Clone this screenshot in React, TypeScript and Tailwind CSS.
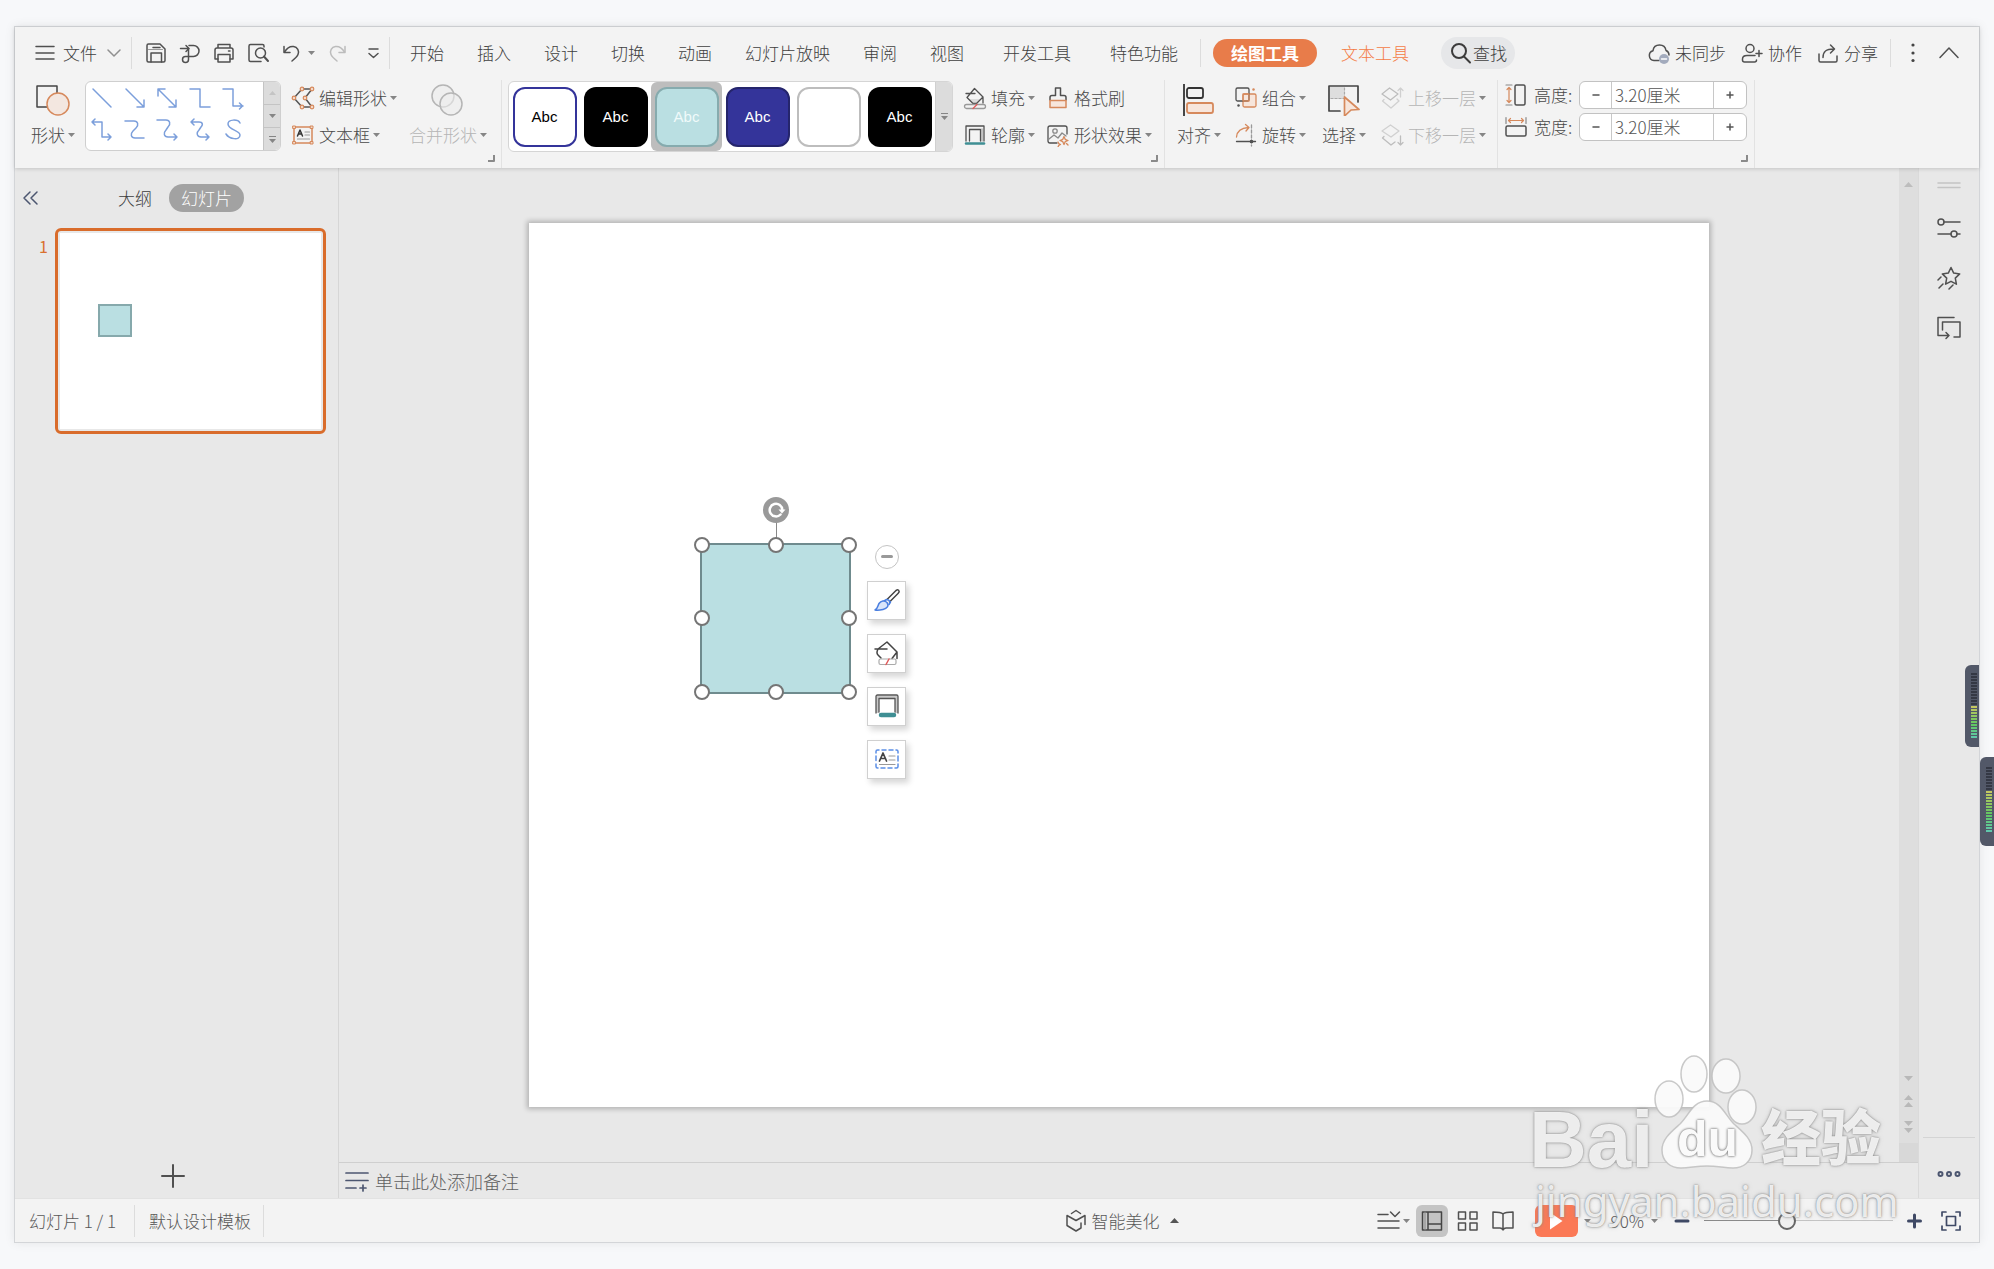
import React from 'react';

type Kids = { children?: React.ReactNode };

function Glyph({
  w = 24,
  h = 24,
  stroke = '#505050',
  sw = 1.5,
  className = '',
  children,
}: Kids & { w?: number; h?: number; stroke?: string; sw?: number; className?: string }) {
  return (
    <svg
      width={w}
      height={h}
      viewBox={`0 0 ${w} ${h}`}
      fill="none"
      stroke={stroke}
      strokeWidth={sw}
      strokeLinecap="round"
      strokeLinejoin="round"
      aria-hidden="true"
      className={`shrink-0 ${className}`}
    >
      {children}
    </svg>
  );
}

function Caret({ color = '#858585', up = false, w = 7, h = 4 }: { color?: string; up?: boolean; w?: number; h?: number }) {
  return (
    <svg width={w} height={h} viewBox="0 0 7 4" preserveAspectRatio="none" aria-hidden="true" className="shrink-0">
      <path d={up ? 'M0 4 3.5 0 7 4z' : 'M0 0h7L3.5 4z'} fill={color} />
    </svg>
  );
}

const OR = '#d6895c';
const DARK = '#444';

/* ---------- tab bar ---------- */

function VLine({ className = '' }: { className?: string }) {
  return <span className={`w-px shrink-0 bg-[#dcdcdc] ${className}`} />;
}

function QuickAccess() {
  return (
    <div className="flex items-center">
      <button aria-label="保存" className="ml-3">
        <Glyph>
          <path d="M3 4.500Q3 3 4.500 3H16l5 5v11.500q0 1.500-1.500 1.500h-15Q3 21 3 19.500z" />
          <path d="M7 21v-9h10.500v9M9 6.500h7" />
          <path d="M4.500 8.500h14" strokeWidth="1" stroke="#999" />
        </Glyph>
      </button>
      <button aria-label="输出为PDF" className="ml-2.5">
        <Glyph>
          <path d="M2.500 7.500h8M8 4.500l3 3-3 3" />
          <path d="M11 4.500h4.500a5.500 5.500 0 0 1 0 11H7.500a3 3 0 1 0 3 3V7.500" />
        </Glyph>
      </button>
      <button aria-label="打印" className="ml-2.5">
        <Glyph>
          <path d="M6 7V3.500h12V7M6 18H3V9q0-2 2-2h14q2 0 2 2v9h-3" />
          <path d="M6 13.500h12V21H6zM16.500 10h1.500" />
        </Glyph>
      </button>
      <button aria-label="打印预览" className="ml-2.5">
        <Glyph>
          <path d="M18 6V5q0-1.500-1.500-1.500h-12Q3 3.500 3 5v14q0 1.500 1.500 1.500H15" />
          <circle cx="14.500" cy="12" r="5" />
          <path d="m18 15.500 4 4.500" strokeWidth="2" />
        </Glyph>
      </button>
      <button aria-label="撤销" className="ml-2.5 flex items-center gap-1">
        <Glyph>
          <path d="M4 5.500v6h6" />
          <path d="M4.500 11C7 7 10 5 13.500 5.500c4 .5 6 4.500 4.500 8-1 2.500-3.500 4.500-6 6.500" />
        </Glyph>
        <Caret />
      </button>
      <button aria-label="恢复" className="ml-2.5">
        <Glyph stroke="#bcbcbc">
          <path d="M20 5.500v6h-6" />
          <path d="M19.500 11C17 7 14 5 10.500 5.500c-4 .5-6 4.500-4.500 8 1 2.500 3.500 4.500 6 6.500" />
        </Glyph>
      </button>
      <button aria-label="自定义快速访问工具栏" className="ml-3">
        <Glyph>
          <path d="M8 8h9M8 12.500l4.500 4 4.500-4" />
        </Glyph>
      </button>
    </div>
  );
}

const tabsA = ['开始', '插入', '设计', '切换', '动画', '幻灯片放映', '审阅', '视图'];
const tabsB = ['开发工具', '特色功能'];

function TabBar() {
  return (
    <nav className="flex h-[52px] items-center whitespace-nowrap pl-5 pr-[18px] text-[#404040]">
      <button className="flex items-center gap-2">
        <Glyph w={20}>
          <path d="M1 5.500h18M1 12h18M1 18h18" />
        </Glyph>
        文件
        <Glyph w={14} className="ml-0.5" stroke="#909090">
          <path d="m1 9 6 6 6-6" />
        </Glyph>
      </button>
      <VLine className="ml-2.5 h-8" />
      <QuickAccess />
      <VLine className="ml-1 h-8" />
      <div className="ml-5 flex gap-[33px]">
        {tabsA.map((t) => (
          <button key={t}>{t}</button>
        ))}
      </div>
      <div className="ml-[39px] flex gap-[39px]">
        {tabsB.map((t) => (
          <button key={t}>{t}</button>
        ))}
      </div>
      <VLine className="ml-[22px] h-7" />
      <button className="ml-3 h-7 rounded-full bg-[#e87c4a] px-[18px] font-bold text-white">绘图工具</button>
      <button className="ml-6 text-[#f47b45]">文本工具</button>
      <button className="ml-8 flex h-8 items-center rounded-full bg-[#e6e7e9] px-2">
        <Glyph stroke="#3c3c3c" sw={2}>
          <circle cx="10" cy="10" r="7" />
          <path d="m15 15.500 6 6" />
        </Glyph>
        查找
      </button>
      <div className="ml-auto flex items-center">
        <button className="flex items-center gap-1">
          <Glyph>
            <path d="M12 19.500H7a5 5 0 0 1-1-9.800C6.500 6 9 4 12.500 4s6 2 6.500 5.500c2 .8 3 2.300 3 4.500" />
            <circle cx="17" cy="18" r="5" fill="#a3abbd" stroke="none" />
            <path d="M14.500 18h5" stroke="#fff" />
          </Glyph>
          未同步
        </button>
        <button className="ml-3.5 flex items-center gap-1">
          <Glyph>
            <circle cx="10" cy="7.500" r="4" />
            <path d="M15 14.500H7Q2.500 14.500 2.500 18v1q0 2 2 2h10q2 0 2-2M16 12.500h6M19 9.500v6" />
          </Glyph>
          协作
        </button>
        <button className="ml-3.5 flex items-center gap-1">
          <Glyph>
            <path d="M3 13v6.500q0 1.500 1.500 1.500h15q1.500 0 1.500-1.500V15" />
            <path d="M7 16.500C7 10.500 10 8 17.500 8M14.500 4l4 4-4 4" />
          </Glyph>
          分享
        </button>
        <VLine className="ml-3 h-7" />
        <button aria-label="更多" className="ml-2.5">
          <Glyph stroke="none">
            <g fill="#444">
              <circle cx="12" cy="4" r="1.600" />
              <circle cx="12" cy="12" r="1.600" />
              <circle cx="12" cy="19.500" r="1.600" />
            </g>
          </Glyph>
        </button>
        <button aria-label="收起功能区" className="ml-3">
          <Glyph>
            <path d="m3 16.500 9-9.500 9 9.500" />
          </Glyph>
        </button>
      </div>
    </nav>
  );
}

/* ---------- ribbon ---------- */

function Group({ children, className = '', corner = true }: Kids & { className?: string; corner?: boolean }) {
  return (
    <section className={`relative flex shrink-0 border-r border-[#e2e2e2] ${className}`}>
      {children}
      {corner && (
        <button aria-label="更多设置" className="absolute bottom-1.5 right-1.5">
          <Glyph w={7} h={7} stroke="#8a8a8a" sw={2}>
            <path d="M0 6h6V0" />
          </Glyph>
        </button>
      )}
    </section>
  );
}

function BigButton({ label, icon, className = '' }: { label: string; icon: React.ReactNode; className?: string }) {
  return (
    <button className={`flex flex-col items-center gap-px ${className}`}>
      <span className="flex h-9 items-end">{icon}</span>
      <span className="flex h-9 items-center gap-[3px]">
        {label}
        <Caret />
      </span>
    </button>
  );
}

function RowButton({
  label,
  icon,
  caret = true,
  className = '',
}: {
  label: string;
  icon: React.ReactNode;
  caret?: boolean;
  className?: string;
}) {
  return (
    <button className={`flex h-9 items-center ${className}`}>
      {icon}
      <span className="ml-1 mr-[3px]">{label}</span>
      {caret && <Caret />}
    </button>
  );
}

function Pair({ children, className = '' }: Kids & { className?: string }) {
  return <div className={`flex flex-col gap-px ${className}`}>{children}</div>;
}

const lineShapes: [string, string][] = [
  ['直线', 'M3 3l18 18'],
  ['箭头', 'M3 3l18 18M21 14v7h-7'],
  ['双箭头', 'M3 3l18 18M21 14v7h-7M3 10V3h7'],
  ['肘形连接符', 'M2 3h10v18h10'],
  ['肘形箭头连接符', 'M2 3h10v17h10M18.500 17l3 3-3 3'],
  ['肘形双箭头连接符', 'M2 4h10v15h9M18 16l3 3-3 3M5 1 2 4l3 3'],
  ['曲线连接符', 'M2 3h9c4 0 5 4 2 7l-3 3c-3 3-2 7 2 7h9'],
  ['曲线箭头连接符', 'M2 2h9c4 0 5 4 2 7l-2 3c-3 3-2 7 2 7h9M19 16l3 3-3 3'],
  ['曲线双箭头连接符', 'M3 4h8c4 0 4 3 2 5l-2 3c-3 3-2 7 2 7h8M18 16l3 3-3 3M6 1 3 4l3 3'],
  ['曲线', 'M19 5c-2-4-12-4-12 1 0 6 12 6 12 11 0 6-11 4-14-1'],
];

function ShapeGallery() {
  return (
    <div className="ml-2.5 mt-px flex h-[70px] w-[196px] overflow-hidden rounded-md border border-[#cfcfcf] bg-white">
      <div className="grid flex-1 grid-cols-5 pb-1 pr-3.5">
        {lineShapes.map(([name, d]) => (
          <button key={name} aria-label={name} className="flex items-center justify-center">
            <Glyph stroke="#7c9fdb" sw={1.5}>
              <path d={d} />
            </Glyph>
          </button>
        ))}
      </div>
      <div className="flex w-[17px] flex-col divide-y divide-[#c4c4c4] border-l border-[#c4c4c4] bg-[#dcdcdc]">
        <button aria-label="上一行" className="flex flex-1 items-center justify-center">
          <Caret up color="#c4c4c4" />
        </button>
        <button aria-label="下一行" className="flex flex-1 items-center justify-center">
          <Caret />
        </button>
        <button aria-label="展开" className="flex flex-1 flex-col items-center justify-center gap-0.5">
          <span className="h-px w-[7px] bg-[#858585]" />
          <Caret />
        </button>
      </div>
    </div>
  );
}

const swatches = [
  { box: 'border-2 border-[#34349a] bg-white text-black' },
  { box: 'bg-black text-white' },
  { box: 'border-2 border-[#86abae] bg-[#badfe2] text-[#f0fafa]', selected: true },
  { box: 'border-2 border-[#25256c] bg-[#34349a] text-white' },
  { box: 'border-2 border-[#bdbdbd] bg-white text-white' },
  { box: 'bg-black text-white' },
];

function StyleGallery() {
  return (
    <div className="ml-1.5 mt-px flex h-[71px] overflow-hidden rounded-md border border-[#d5d5d5] bg-white">
      <div className="flex items-center">
        {swatches.map((s, i) => (
          <div
            key={i}
            className={`flex h-full w-[71px] items-center justify-center rounded-md ${s.selected ? 'bg-[#bdbdbd]' : ''}`}
          >
            <button
              aria-label={`形状样式 ${i + 1}`}
              className={`h-[60px] w-16 rounded-xl font-['Liberation_Sans',sans-serif] text-[15px] font-normal ${s.box}`}
            >
              {i === 4 ? '' : 'Abc'}
            </button>
          </div>
        ))}
      </div>
      <button
        aria-label="更多样式"
        className="flex w-[17px] flex-col items-center justify-center gap-0.5 border-l border-[#d0d0d0] bg-[#dcdcdc]"
      >
        <span className="h-px w-[7px] bg-[#858585]" />
        <Caret />
      </button>
    </div>
  );
}

const BucketIcon = (
  <Glyph sw={1.3}>
    <path d="M5.500 13h13l-5 5h-3z" fill="#dcdcdc" stroke="none" />
    <path d="M3 7.500h9M11.500 2.500 20 11l-6.500 6.500h-3.500L4 11.500zM20 11v6" />
    <rect x="1.500" y="18.500" width="21" height="4" rx="2" stroke="#999" />
    <path d="m10 22.500 4-4" stroke="#e05a5a" />
  </Glyph>
);

const OutlineIcon = (
  <Glyph sw={1.3}>
    <path d="M3 18V3h18v15M6.500 18V6.500h11V18" />
    <path d="M19 6v12" stroke="#aaa" />
    <path d="M3 20.500h18" stroke="#3f8f94" strokeWidth="2.500" />
  </Glyph>
);

function SizeField({ label, icon }: { label: string; icon: React.ReactNode }) {
  return (
    <div className="flex h-7 items-center">
      {icon}
      <label htmlFor={label} className="ml-1.5 w-[45px]">
        {label}:
      </label>
      <div className="flex h-7 w-[168px] divide-x divide-[#c8c8c8] overflow-hidden rounded-md border border-[#c2c2c2] bg-white">
        <button aria-label={`减小${label}`} className="flex w-8 shrink-0 items-center justify-center">
          <Glyph w={8} h={8} stroke="#555">
            <path d="M1 4h6" />
          </Glyph>
        </button>
        <input id={label} defaultValue="3.20厘米" className="min-w-0 flex-1 px-[3px] text-[#555] outline-none" />
        <button aria-label={`增大${label}`} className="flex w-8 shrink-0 items-center justify-center">
          <Glyph w={8} h={8} stroke="#555">
            <path d="M1 4h6M4 1v6" />
          </Glyph>
        </button>
      </div>
    </div>
  );
}

function Ribbon() {
  return (
    <div className="flex h-[89px] whitespace-nowrap pl-4 pt-px text-[#484848]">
      <Group className="pr-3.5">
        <BigButton
          label="形状"
          icon={
            <Glyph w={34} h={32} stroke={DARK}>
              <rect x="1" y="2" width="20" height="21" />
              <circle cx="22" cy="20" r="11" fill="#f3e7e0" stroke={OR} />
            </Glyph>
          }
        />
        <ShapeGallery />
        <Pair className="ml-2.5">
          <RowButton
            label="编辑形状"
            icon={
              <Glyph stroke="#555">
                <path d="m3 12 8-9h10l-7 9 7 9H11z" />
                <g fill="#f3d9c9" stroke={OR} strokeWidth="1.200">
                  <circle cx="3" cy="12" r="1.800" />
                  <circle cx="11" cy="3" r="1.800" />
                  <circle cx="21" cy="3" r="1.800" />
                  <circle cx="14" cy="12" r="1.800" />
                  <circle cx="21" cy="21" r="1.800" />
                  <circle cx="11" cy="21" r="1.800" />
                </g>
              </Glyph>
            }
          />
          <RowButton
            label="文本框"
            icon={
              <Glyph stroke={OR}>
                <rect x="3" y="4" width="18" height="16" />
                <g fill="#f3d9c9" strokeWidth="1">
                  <rect x="2" y="3" width="2.500" height="2.500" />
                  <rect x="19.500" y="3" width="2.500" height="2.500" />
                  <rect x="2" y="18.500" width="2.500" height="2.500" />
                  <rect x="19.500" y="18.500" width="2.500" height="2.500" />
                </g>
                <path d="m6.500 13 2.500-6 2.500 6M7.500 11h3" stroke="#333" />
                <path d="M14 9h4.500M14 12h4.500M6.500 16h12" stroke="#999" strokeWidth="1.200" />
              </Glyph>
            }
          />
        </Pair>
        <BigButton
          className="ml-3 text-[#b5b5b5]"
          label="合并形状"
          icon={
            <Glyph w={34} h={32} stroke="#b5b5b5">
              <circle cx="12" cy="12" r="11" fill="#ececec" fillOpacity=".6" />
              <circle cx="20" cy="20" r="11" fill="#ececec" fillOpacity=".6" />
            </Glyph>
          }
        />
      </Group>

      <Group className="pr-3">
        <StyleGallery />
        <Pair className="ml-2.5">
          <RowButton label="填充" icon={BucketIcon} />
          <RowButton label="轮廓" icon={OutlineIcon} />
        </Pair>
        <Pair className="ml-[11px]">
          <RowButton
            label="格式刷"
            caret={false}
            icon={
              <Glyph>
                <path d="M4 14v-2.500q0-2 2-2h3.500V2h5v7.500H18q2 0 2 2V14" />
                <path d="M4 14.500h16v7H4z" fill="#f7e6dc" stroke={OR} />
              </Glyph>
            }
          />
          <RowButton
            label="形状效果"
            icon={
              <Glyph sw={1.3}>
                <path d="M11 20H4q-2 0-2-2V5q0-2 2-2h15q2 0 2 2v6" />
                <circle cx="9" cy="8" r="2.200" stroke="#888" />
                <path d="m3 16 5-4 4 3 4-5 4 3" stroke="#888" />
                <path d="m18 13.500 1.200 2.800 2.800 1.200-2.800 1.200L18 21.500l-1.200-2.800L14 17.500l2.800-1.200zM12 19l.8 1.700 1.700.8-1.700.8L12 24M20.500 20.500l1.500 1.500" stroke={OR} />
              </Glyph>
            }
          />
        </Pair>
      </Group>

      <Group corner={false} className="pl-3 pr-[11px]">
        <BigButton
          label="对齐"
          icon={
            <Glyph w={34} h={32} stroke="#333" sw={1.8}>
              <path d="M2 0v32" />
              <rect x="5" y="4" width="16" height="10" rx="2" />
              <rect x="5" y="19" width="26" height="10" rx="2" fill="#f7e6dc" stroke={OR} />
            </Glyph>
          }
        />
        <Pair className="ml-[13px]">
          <RowButton
            label="组合"
            icon={
              <Glyph sw={1.3}>
                <rect x="9" y="8" width="13" height="13" rx="1.500" fill="#f7e6dc" stroke={OR} />
                <rect x="2" y="2" width="13" height="13" rx="1.500" />
                <rect x="9" y="8" width="6" height="7" stroke={OR} />
                <path d="M19.500 3.500v.1" stroke={OR} strokeWidth="2.500" />
                <path d="M4.500 19.500v.1" strokeWidth="2.500" />
              </Glyph>
            }
          />
          <RowButton
            label="旋转"
            icon={
              <Glyph sw={1.3}>
                <path d="M2.500 14C3 8 7 5 14.500 4.500M11.500 1.500l3.500 3-3 3.500" stroke={OR} />
                <path d="M2.500 18.500h19" />
                <path d="M17.500 2v21" stroke="#999" strokeDasharray="3 2" />
                <circle cx="17.500" cy="18.500" r="1.200" fill="#555" />
              </Glyph>
            }
          />
        </Pair>
        <BigButton
          className="ml-4"
          label="选择"
          icon={
            <Glyph w={34} h={32} stroke={DARK} sw={1.700}>
              <path d="M3 3h15v12H3z" fill="#dedede" stroke="none" />
              <path d="M13 27H2V2h29v16" />
              <path d="M4 14.500h14M17.500 4v10" stroke="#aaa" strokeDasharray="2 2" strokeWidth="1.200" />
              <path d="M17.500 13 32 25.500l-8 .5-6.500 6z" fill="#f7e6dc" stroke={OR} />
            </Glyph>
          }
        />
        <Pair className="ml-3.5 text-[#b5b5b5]">
          <RowButton
            label="上移一层"
            icon={
              <Glyph stroke="#bdbdbd" sw={1.3}>
                <path d="M9.500 2 18 8l-7.500 6L2 8z" />
                <path d="M4 13.500 2.500 15l8.500 7 8-7-2-2M20.500 11V2M18 4.500 20.500 2 23 4.500" stroke="#d0d0d0" />
              </Glyph>
            }
          />
          <RowButton
            label="下移一层"
            icon={
              <Glyph stroke="#bdbdbd" sw={1.3}>
                <path d="M10.500 2 19 8l-8 6L2 8z" stroke="#d0d0d0" />
                <path d="M4 13.500 2.500 15l8.500 7 4-3M20.500 13v9M18 19.500l2.500 2.500 2.500-2.500" />
              </Glyph>
            }
          />
        </Pair>
      </Group>

      <Group className="pl-1.5 pr-[7px]">
        <div className="mt-px flex flex-col gap-1">
          <SizeField
            label="高度"
            icon={
              <Glyph>
                <rect x="11" y="2" width="10" height="20" rx="1.500" />
                <path d="M5 4.500v15M3 6.500l2-2 2 2M3 17.500l2 2 2-2" stroke={OR} strokeWidth="1.200" />
                <path d="M2 2h6M2 22h6" stroke="#888" strokeWidth="1.200" />
              </Glyph>
            }
          />
          <SizeField
            label="宽度"
            icon={
              <Glyph>
                <rect x="2" y="11" width="20" height="10" rx="1.500" />
                <path d="M4.500 5.500h15M6.500 3.500l-2 2 2 2M17.500 3.500l2 2-2 2" stroke={OR} strokeWidth="1.200" />
                <path d="M2 2.500v6M22 2.500v6" stroke="#888" strokeWidth="1.200" />
              </Glyph>
            }
          />
        </div>
      </Group>
    </div>
  );
}

/* ---------- slide panel ---------- */

function SlidePanel() {
  return (
    <aside className="flex w-[324px] shrink-0 flex-col border-r border-[#d6d6d6]">
      <div className="mt-4 flex h-7 items-center pl-1">
        <button aria-label="收起面板">
          <Glyph stroke="#4c5670">
            <path d="m11 6-6 6 6 6M18 6l-6 6 6 6" />
          </Glyph>
        </button>
        <button className="ml-[75px] text-[#3c3c3c]">大纲</button>
        <button className="ml-[17px] h-7 rounded-full bg-[#a2a2a2] px-3 text-white">幻灯片</button>
      </div>
      <div className="mt-4 flex items-start pl-6 pr-3">
        <span className="mt-1.5 w-4 text-base font-normal text-[#d9702f]">1</span>
        <button
          aria-label="幻灯片 1"
          className="aspect-[271/206] flex-1 rounded-md border-[3px] border-[#d96c2b] bg-[#e8e8e8] p-0.5"
        >
          <span className="relative block h-full bg-white">
            <span className="absolute left-[14.500%] top-[36%] block aspect-square w-[13%] border-2 border-[#86a9ac] bg-[#badfe2]" />
          </span>
        </button>
      </div>
      <button aria-label="新建幻灯片" className="mb-2.5 mt-auto self-center pr-2">
        <Glyph stroke="#505050" sw={2}>
          <path d="M12 1v22M1 12h22" />
        </Glyph>
      </button>
    </aside>
  );
}

/* ---------- canvas ---------- */

const handles = [
  'left-0 top-0',
  'left-1/2 top-0',
  'left-full top-0',
  'left-0 top-1/2',
  'left-full top-1/2',
  'left-0 top-full',
  'left-1/2 top-full',
  'left-full top-full',
];

const floatTools: [string, React.ReactNode][] = [
  [
    '样式',
    <Glyph key="a" w={26} h={26}>
      <path d="m13 12.500 9-9q2.500-1.500 3 .5.500 1-1 2.500l-8.500 8.500" stroke="#444" />
      <path d="M12.500 12.500q2.500 0 3.500 2.500M10 14l2.500-1.500M15 17.500l1.500-2.500" stroke="#4a7fe0" />
      <path d="M1 23c3-1.500 2.500-4 4-6.500 2-3 5.500-3.500 8-1 2.500 3.500 0 6-4 7-3 .7-6 1-8 .5z" fill="#d9e5fa" stroke="#4a7fe0" />
    </Glyph>,
  ],
  [
    '填充',
    <Glyph key="b" w={26} h={26} stroke="#444">
      <path d="M1 9h12M4 9l9-7 10 10-5 6.500M4 9q-2 4 0 6l3 3M23 12v6.500" />
      <rect x="5" y="19" width="17" height="5.500" rx="1.500" stroke="#aaa" strokeWidth="1.200" />
      <path d="m12 24.500 3-5.500" stroke="#e05a5a" />
    </Glyph>,
  ],
  [
    '轮廓',
    <Glyph key="c" w={26} h={26} stroke="#555">
      <path d="M3.500 20V4h19v16" strokeWidth="3" stroke="#c9c9c9" strokeLinecap="butt" />
      <path d="M2 20V3.500Q2 2 3.500 2h19Q24 2 24 3.500V20M5 19V5.500h16V19" strokeWidth="1.300" />
      <path d="M7 22h13" stroke="#3f8f94" strokeWidth="4.500" />
    </Glyph>,
  ],
  [
    '文本框',
    <Glyph key="d" w={26} h={26} stroke="#5b8ee6">
      <path d="M2 7V5.500Q2 4 3.500 4H5M8 4h4M15 4h4M22 4h.5Q24 4 24 5.500V7M24 10v5M24 18v2.500q0 1.500-1.500 1.500H21M18 22h-4M11 22H7M4 22h-.5Q2 22 2 20.500V18M2 14.500V10" />
      <path d="m5.500 15 3.500-8 3.500 8M6.500 12.500h5" stroke="#444" strokeWidth="1.700" />
      <path d="M15 10h6M15 14h6M5.500 18.500H21" stroke="#999" strokeWidth="1.200" />
    </Glyph>,
  ],
];

function SelectedShape() {
  return (
    <div className="absolute left-[14.500%] top-[36.200%] aspect-square w-[12.800%] border-2 border-[#6f8b8e] bg-[#badfe2]">
      <span className="absolute bottom-full left-1/2 h-6 w-px bg-[#888]" />
      <button
        aria-label="旋转"
        className="absolute -top-12 left-1/2 flex size-[26px] -translate-x-1/2 items-center justify-center rounded-full bg-[#999]"
      >
        <Glyph w={20} h={20} stroke="#fff" sw={2.5}>
          <path d="M14.500 14.500a6.300 6.300 0 1 1 1.800-4.500" />
          <path d="M12.500 9.500h7l-3.500 4z" fill="#fff" stroke="none" />
        </Glyph>
      </button>
      {handles.map((h) => (
        <span
          key={h}
          className={`absolute size-4 -translate-x-1/2 -translate-y-1/2 rounded-full border-2 border-[#757575] bg-white ${h}`}
        />
      ))}
      <div className="absolute left-full top-0 ml-[18px] flex flex-col items-center gap-3.5">
        <button
          aria-label="收起工具"
          className="flex size-6 items-center justify-center rounded-full border border-[#c4c4c4] bg-white"
        >
          <span className="h-[3px] w-3 rounded-full bg-[#999]" />
        </button>
        {floatTools.map(([name, icon]) => (
          <button
            key={name}
            aria-label={name}
            className="flex size-[39px] -translate-y-0.5 items-center justify-center border border-[#d0d0d0] bg-white shadow-[3px_4px_6px_rgba(0,0,0,0.16)]"
          >
            {icon}
          </button>
        ))}
      </div>
    </div>
  );
}

function ScrollBar() {
  return (
    <div className="flex w-[19px] shrink-0 flex-col items-center bg-[#dedede] pt-3.5">
      <Caret up color="#bdbdbd" w={9} h={5} />
      <div className="mb-2.5 mt-auto flex flex-col items-center gap-3.5">
        <Caret color="#b8b8b8" w={9} h={5} />
        <span className="flex flex-col gap-0.5">
          <Caret up color="#b8b8b8" w={9} h={5} />
          <Caret up color="#b8b8b8" w={9} h={5} />
        </span>
        <span className="flex flex-col gap-0.5">
          <Caret color="#b8b8b8" w={9} h={5} />
          <Caret color="#b8b8b8" w={9} h={5} />
        </span>
      </div>
      <span className="h-[19px] w-full bg-[#d8d8d8]" />
    </div>
  );
}

function Canvas() {
  return (
    <main className="flex min-w-0 flex-1 flex-col">
      <div className="flex flex-1">
        <div className="flex flex-1 items-center justify-center">
          <div className="relative aspect-[4/3] w-[75.600%] bg-white shadow-[0_0_5px_2px_rgba(0,0,0,0.24)]">
            <SelectedShape />
          </div>
        </div>
        <ScrollBar />
      </div>
      <div className="flex h-9 items-center gap-1 border-t border-[#cfcfcf] pl-1.5">
        <Glyph stroke="#4c5670" sw={1.700}>
          <path d="M1 4h22M1 11.500h22M1 19h10M18 16v6M15 19h6" />
        </Glyph>
        <textarea
          aria-label="备注"
          rows={1}
          placeholder="单击此处添加备注"
          className="h-7 min-w-0 flex-1 resize-none overflow-hidden bg-transparent px-0.5 text-lg leading-7 outline-none placeholder:text-[#606060]"
        />
      </div>
    </main>
  );
}

/* ---------- right dock ---------- */

function Dock() {
  return (
    <aside className="flex w-[61px] shrink-0 flex-col items-center border-l border-[#dadada] pb-3 pt-1.5">
      <Glyph stroke="#c4c4c4">
        <path d="M1 9h22M1 13.500h22" />
      </Glyph>
      <button aria-label="对象属性" className="mt-[18px]">
        <Glyph>
          <circle cx="4" cy="6" r="3" />
          <path d="M7 6h16M1 18h13M20 18h3" />
          <circle cx="17" cy="18" r="3" />
        </Glyph>
      </button>
      <button aria-label="动画" className="mt-[26px]">
        <Glyph>
          <path d="m14 1.500 2.700 5.600 6 .8-4.400 4.200 1.100 6.100L14 15.300l-5.400 2.900 1.100-6.100-4.400-4.200 6-.8zM4 11l-3 3M6 18l-4 4M16 19l-4 4" />
        </Glyph>
      </button>
      <button aria-label="切换" className="mt-[26px]">
        <Glyph>
          <path d="M17 1.500H1v18h11M9 16.500l3 3-3 3M5.500 14V6H23v15h-6" />
        </Glyph>
      </button>
      <span className="mt-auto h-px w-[52px] bg-[#d4d4d4]" />
      <button aria-label="更多面板" className="mt-6">
        <Glyph stroke="#4c5670" sw={2}>
          <circle cx="3.500" cy="12" r="2" />
          <circle cx="12" cy="12" r="2" />
          <circle cx="20.500" cy="12" r="2" />
        </Glyph>
      </button>
    </aside>
  );
}

/* ---------- status bar ---------- */

function StatusBar() {
  return (
    <footer className="flex h-11 shrink-0 items-center whitespace-nowrap border-t border-[#e2e2e2] bg-[#f3f3f3] pl-3.5 pr-4 text-[#585858]">
      <span className="w-[105px]">幻灯片 1 / 1</span>
      <VLine className="h-8" />
      <span className="ml-3.5">默认设计模板</span>
      <VLine className="ml-3 h-8" />
      <button className="ml-auto mr-[198px] flex items-center gap-1">
        <Glyph>
          <path d="m7.500 4.500 4.500-3 4.500 3M3 6.500l9 5 9-5v9M3 6.500v10l9 5.500 5-3v-5" />
        </Glyph>
        智能美化
        <span className="ml-1.5">
          <Caret up color="#555" w={9} h={5} />
        </span>
      </button>
      <button aria-label="备注" className="flex items-center gap-0.5">
        <Glyph>
          <path d="M1 5.500h10M1 12h21M1 19h21M13.500 3l4.500 4.500L22.500 3" />
        </Glyph>
        <Caret />
      </button>
      <button aria-label="普通视图" className="ml-1.5 flex h-8 w-8 items-center justify-center rounded-md bg-[#c4c4c4]">
        <Glyph stroke="#444">
          <path d="M2.500 3h19v18h-19zM8 3v18M8 15h13.500" />
          <path d="M5 3v18" stroke="#888" strokeWidth="1" />
        </Glyph>
      </button>
      <button aria-label="幻灯片浏览" className="ml-2">
        <Glyph>
          <path d="M2.500 3h7v7h-7zM14 3h7v7h-7zM2.500 14h7v7h-7zM14 14h7v7h-7z" />
        </Glyph>
      </button>
      <button aria-label="阅读版式" className="ml-[11px]">
        <Glyph>
          <path d="M12 5v14M12 5q-2-2-10-2v16h7q2 0 3 2 1-2 3-2h7V3q-8 0-10 2" />
        </Glyph>
      </button>
      <button
        aria-label="放映"
        className="ml-5 flex h-8 w-[43px] items-center justify-center rounded-md bg-[#fb7956]"
      >
        <Glyph stroke="none">
          <path d="M6 3.500v17L18.500 12z" fill="#fff" />
        </Glyph>
      </button>
      <button aria-label="放映选项" className="ml-1.5">
        <Caret />
      </button>
      <button className="ml-5 flex items-center gap-[7px]">
        90%
        <Caret />
      </button>
      <button aria-label="缩小" className="ml-3">
        <Glyph stroke="#3f4965" sw={3}>
          <path d="M6 12h12" />
        </Glyph>
      </button>
      <input
        type="range"
        aria-label="缩放"
        defaultValue={43}
        className="ml-2.5 h-px w-[189px] appearance-none bg-linear-to-r from-[#8a8a8a] from-43% to-[#c4c4c4] to-43% [&::-webkit-slider-thumb]:size-[18px] [&::-webkit-slider-thumb]:appearance-none [&::-webkit-slider-thumb]:rounded-full [&::-webkit-slider-thumb]:border-2 [&::-webkit-slider-thumb]:border-[#666] [&::-webkit-slider-thumb]:bg-[#f0f0f0]"
      />
      <button aria-label="放大" className="ml-2.5">
        <Glyph stroke="#3f4965" sw={3}>
          <path d="M5.500 12h12M11.500 6v12" />
        </Glyph>
      </button>
      <button aria-label="适应窗口" className="ml-3">
        <Glyph stroke="#3f4965" sw={1.700}>
          <path d="M3 7V3h4M17 3h4v4M21 17v4h-4M7 21H3v-4M7.500 7.500h9v9h-9z" />
        </Glyph>
      </button>
    </footer>
  );
}

/* ---------- overlays ---------- */

function Meter({ className = '', lit }: { className?: string; lit: number }) {
  const total = 22;
  return (
    <div className={`absolute flex flex-col gap-px bg-[#525868] ${className}`}>
      {Array.from({ length: total }, (_, i) => {
        const on = i >= total - lit;
        const t = (i - (total - lit)) / lit;
        return (
          <span
            key={i}
            className="block h-0.5 w-1.5"
            style={{ background: on ? `hsl(${62 + t * 110} 48% 58%)` : '#343844' }}
          />
        );
      })}
    </div>
  );
}

function Watermark() {
  return (
    <div className="pointer-events-none absolute bottom-5 right-[84px] w-[366px] select-none leading-none text-[#fafafa]/90 [text-shadow:0_0_2px_#777,0_0_4px_#9998]">
      <div className="flex items-end">
        <span className="w-[124px] font-['Liberation_Sans',sans-serif] text-[80px] font-bold">Bai</span>
        <div className="relative mb-2">
          <svg width="104" height="124" viewBox="0 0 104 124" aria-hidden="true">
            <g fill="#fafafa" fillOpacity=".95" stroke="#bbb" strokeOpacity=".8" strokeWidth="1.500">
              <ellipse cx="16" cy="51" rx="14" ry="18" />
              <ellipse cx="41" cy="26" rx="13" ry="18" />
              <ellipse cx="73" cy="28" rx="14" ry="17" />
              <ellipse cx="89" cy="59" rx="14" ry="17" />
              <path d="M54 53c14 0 18 14 27 23 9 8 18 15 18 26 0 12-9 18-19 18-9 0-15-2-26-2s-17 2-26 2c-10 0-19-6-19-18 0-11 9-18 18-26 9-9 13-23 27-23z" />
            </g>
          </svg>
          <span className="absolute bottom-2 left-6 font-['Liberation_Sans',sans-serif] text-[50px] font-bold text-[#fafafa] [text-shadow:0_0_2px_#777,0_0_3px_#888]">
            du
          </span>
        </div>
        <span className="mb-4 ml-1 font-['Noto_Sans_CJK_SC',sans-serif] text-[60px] font-black">经验</span>
      </div>
      <div className="pl-1.5 font-['Noto_Sans',sans-serif] text-[42px] font-normal">jingyan.baidu.com</div>
    </div>
  );
}

export default function App() {
  return (
    <div className="relative flex min-h-screen flex-col overflow-hidden bg-[#f7f8fa] px-3.5 py-[26px] font-['Noto_Sans_CJK_SC',sans-serif] text-[17px] font-light leading-6">
      <div className="relative flex flex-1 flex-col border border-[#d3d5d8] bg-[#e8e8e8] shadow-[0_0_10px_rgba(0,0,0,0.08)]">
        <header className="z-10 shrink-0 bg-[#f3f3f3] shadow-[0_1px_4px_rgba(0,0,0,0.16)]">
          <TabBar />
          <Ribbon />
        </header>
        <div className="flex flex-1">
          <SlidePanel />
          <Canvas />
          <Dock />
        </div>
        <StatusBar />
        <Watermark />
        <Meter lit={11} className="right-0 top-[638px] h-[82px] rounded-l-md py-2 pl-1.5 pr-0.5" />
      </div>
      <Meter lit={14} className="right-0 top-[757px] h-[89px] rounded-l-md py-2.5 pl-1.5 pr-0.5" />
    </div>
  );
}
